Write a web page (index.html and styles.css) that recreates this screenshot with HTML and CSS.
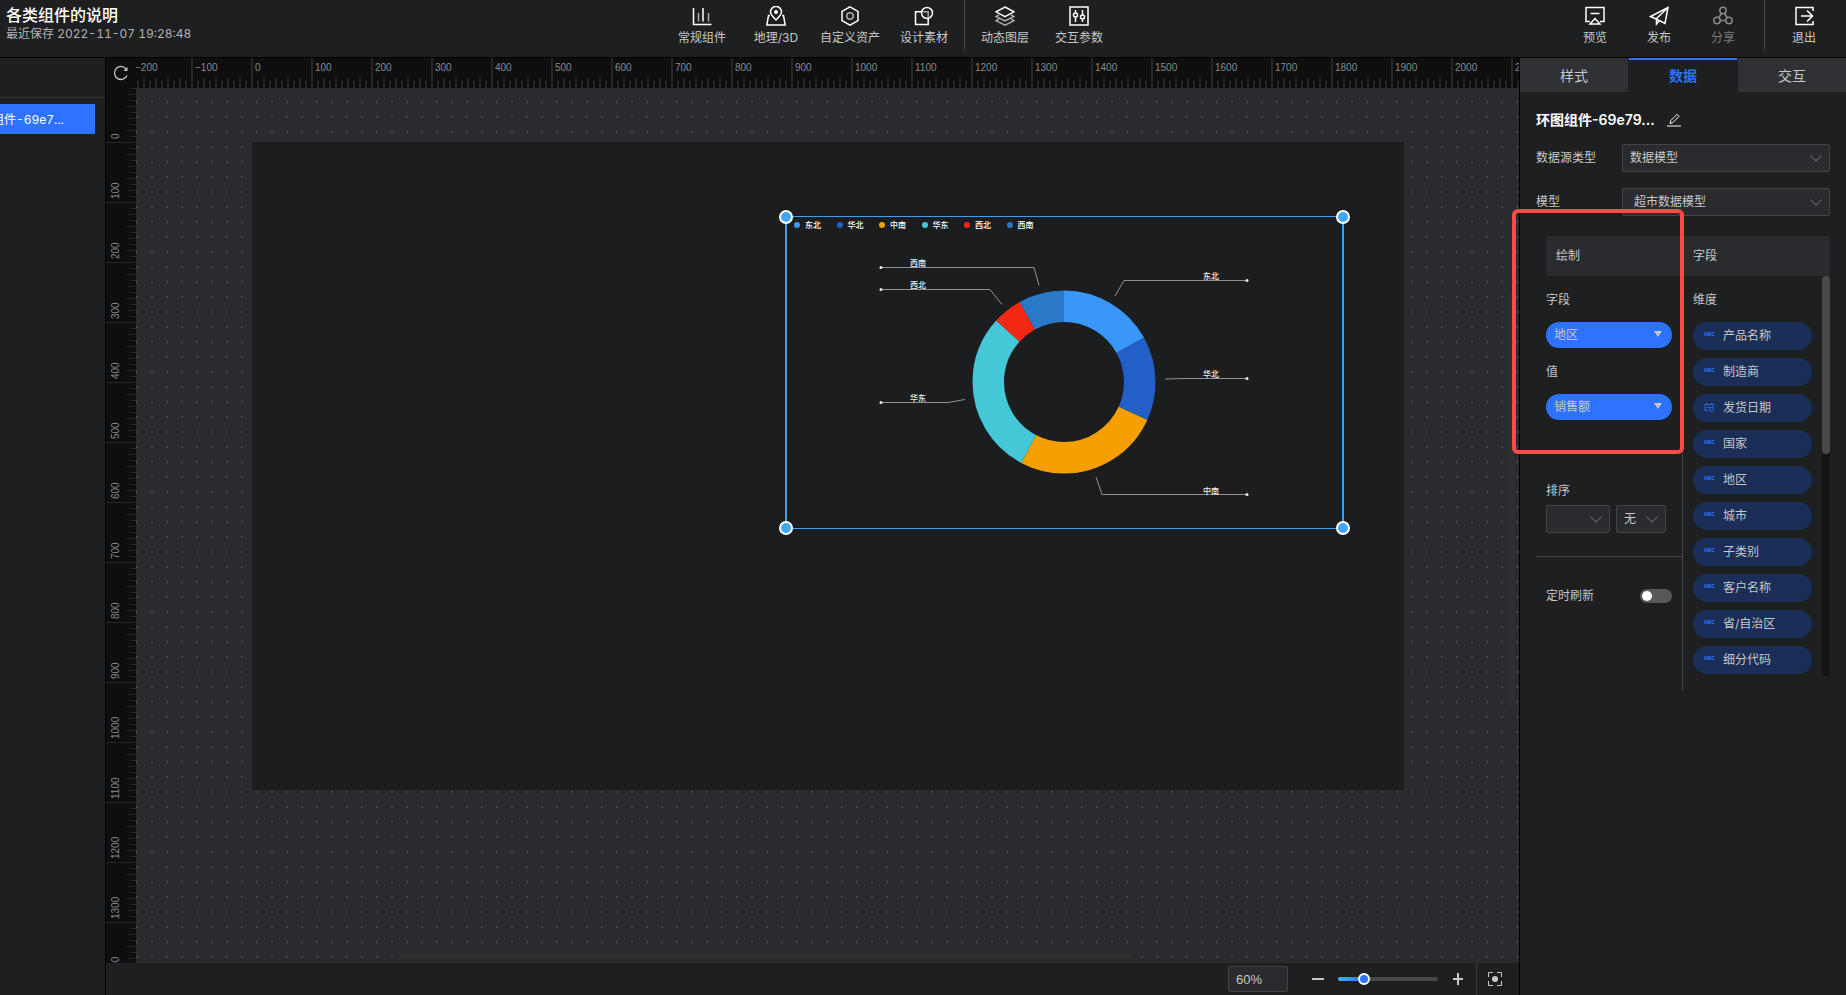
FILE: index.html
```html
<!DOCTYPE html>
<html lang="zh-CN">
<head>
    <meta charset="UTF-8">
    <title>各类组件的说明</title>
    <link rel="stylesheet" href="styles.css">
</head>
<body>
    <header class="topbar">
        <div class="project">
            <h1>各类组件的说明</h1>
            <p>最近保存 2022-11-07 19:28:48</p>
        </div>
        <nav class="tools">
            <button type="button">
                <svg viewBox="0 0 20 20"><path d="M1.500 2v16.500h18"/><path d="M6.500 7v8.500M16.500 7v8.500" class="dim"/><path d="M11 2v13.500"/></svg>
                常规组件
            </button>
            <button type="button">
                <svg viewBox="0 0 20 20"><path d="M10 14C6 10 4.500 8 4.500 6a5.500 5.500 0 0 1 11 0C15.500 8 14 10 10 14z"/><circle cx="10" cy="6" r="2" class="fill"/><path d="M4 9.500H2.500L.8 19h18.400L17.500 9.500H16"/></svg>
                地理/3D
            </button>
            <button type="button">
                <svg viewBox="0 0 20 20"><path d="M10 .8l8 4.600v9.200l-8 4.600-8-4.600V5.400z"/><circle cx="10" cy="10" r="3.200" class="dim"/></svg>
                自定义资产
            </button>
            <button type="button">
                <svg viewBox="0 0 20 20"><path d="M8 5.800H1.500v12.700h12.700V12"/><circle cx="13" cy="7" r="5.500"/><path d="M8 5.800h6.200V12" class="dim"/></svg>
                设计素材
            </button>
            <span class="divider"></span>
            <button type="button">
                <svg viewBox="0 0 20 20"><path d="M10 1l9 4.800-9 4.800-9-4.800z"/><path d="M4 8.800l-3 1.700 9 4.500 9-4.500-3-1.700M4 13l-3 1.700 9 4.500 9-4.500-3-1.700" class="dim"/></svg>
                动态图层
            </button>
            <button type="button">
                <svg viewBox="0 0 20 20"><path d="M1 1h18v18H1z"/><path d="M6.500 4v3M6.500 11v5M13.500 4v5M13.500 13v3"/><circle cx="6.500" cy="9" r="2"/><circle cx="13.500" cy="11" r="2"/></svg>
                交互参数
            </button>
        </nav>
        <div class="actions">
            <button type="button">
                <svg viewBox="0 0 20 20"><path d="M5 15.500H1v-14h18v14h-4M5.500 7.500h9M5 18h10l-5-5.500z"/></svg>
                预览
            </button>
            <button type="button">
                <svg viewBox="0 0 20 20"><path d="M19 1.500L1.500 10.500l4 1.800L16 17.500zM19 1.500L7.500 12.500V18l3-3.500"/></svg>
                发布
            </button>
            <button type="button" disabled>
                <svg viewBox="0 0 20 20"><circle cx="10" cy="4.500" r="3.200"/><circle cx="4" cy="14.500" r="3.200"/><circle cx="16" cy="14.500" r="3.200"/><path d="M8.500 7.500l-3 4.500M11.500 7.500l3 4.500M7.200 14.500h5.600"/></svg>
                分享
            </button>
            <span class="divider"></span>
            <button type="button">
                <svg viewBox="0 0 20 20"><path d="M19 5V1.500H2v17h17V15M7 10h11M13 4.500l5.500 5.500-5.500 5.500"/></svg>
                退出
            </button>
        </div>
    </header>

    <main class="workspace">
        <aside class="layers">
            <div class="layers-head"></div>
            <button type="button" class="layer">环图组件-69e7...</button>
        </aside>

        <section class="editor">
            <div class="board">
                <button type="button" class="reset" aria-label="重置">
                    <svg viewBox="0 0 16 16"><path d="M13.500 4.500A6.500 6.500 0 1 0 14 10.500"/><path d="M14.500 2v4h-4z" class="fill"/></svg>
                </button>
                <div class="ruler ruler-x" id="rulerX"></div>
                <div class="ruler ruler-y" id="rulerY"></div>
                <div class="canvas">
                    <div class="stage">
                        <div class="widget">
                            <ul class="legend">
                                <li><i class="c1"></i>东北</li>
                                <li><i class="c2"></i>华北</li>
                                <li><i class="c3"></i>中南</li>
                                <li><i class="c4"></i>华东</li>
                                <li><i class="c5"></i>西北</li>
                                <li><i class="c6"></i>西南</li>
                            </ul>
                            <svg class="chart" viewBox="1 1 557 312">
                                <g class="ring" transform="rotate(-90 278 166)">
                                    <circle class="c1" cx="278" cy="166" r="75.750" pathLength="360" stroke-dasharray="61 299"/>
                                    <circle class="c2" cx="278" cy="166" r="75.750" pathLength="360" stroke-dasharray="53.500 306.500" stroke-dashoffset="-61"/>
                                    <circle class="c3" cx="278" cy="166" r="75.750" pathLength="360" stroke-dasharray="93.400 266.600" stroke-dashoffset="-114.500"/>
                                    <circle class="c4" cx="278" cy="166" r="75.750" pathLength="360" stroke-dasharray="104.300 255.700" stroke-dashoffset="-207.900"/>
                                    <circle class="c5" cx="278" cy="166" r="75.750" pathLength="360" stroke-dasharray="18.800 341.200" stroke-dashoffset="-312.200"/>
                                    <circle class="c6" cx="278" cy="166" r="75.750" pathLength="360" stroke-dasharray="29 331" stroke-dashoffset="-331"/>
                                </g>
                                <g class="leads">
                                    <path d="M95 51.500h153l5 18"/>
                                    <path d="M95 73.500h109l12 15"/>
                                    <path d="M95 186.500h67l17-3"/>
                                    <path d="M329 80l9-15.500h123"/>
                                    <path d="M379 163l18-.5h64"/>
                                    <path d="M310 261l6 17.500h145"/>
                                </g>
                                <g class="ends">
                                    <circle cx="95" cy="51.500" r="1.500"/>
                                    <circle cx="95" cy="73.500" r="1.500"/>
                                    <circle cx="95" cy="186.500" r="1.500"/>
                                    <circle cx="461" cy="64.500" r="1.500"/>
                                    <circle cx="461" cy="162.500" r="1.500"/>
                                    <circle cx="461" cy="278.500" r="1.500"/>
                                </g>
                                <g class="names">
                                    <text x="124" y="50">西南</text>
                                    <text x="124" y="72">西北</text>
                                    <text x="124" y="185">华东</text>
                                    <text x="417" y="63">东北</text>
                                    <text x="417" y="161">华北</text>
                                    <text x="417" y="278">中南</text>
                                </g>
                            </svg>
                            <span class="handle tl"></span>
                            <span class="handle tr"></span>
                            <span class="handle bl"></span>
                            <span class="handle br"></span>
                        </div>
                    </div>
                    <span class="scroll-x"></span>
                    <span class="scroll-y"></span>
                </div>
            </div>
            <footer class="zoombar">
                <input type="text" class="percent" value="60%" aria-label="缩放比例">
                <button type="button" class="step" aria-label="缩小"><svg viewBox="0 0 12 12"><path d="M0 6h12"/></svg></button>
                <input type="range" min="0" max="100" value="23" aria-label="缩放">
                <button type="button" class="step" aria-label="放大"><svg viewBox="0 0 12 12"><path d="M1 6h10M6 0v12"/></svg></button>
                <button type="button" class="fit" aria-label="适应画布">
                    <svg viewBox="0 0 14 14"><path d="M.5 5V.5H5M9 .5h4.500V5M13.500 9v4.500H9M5 13.500H.5V9"/><circle cx="7" cy="7" r="3"/></svg>
                </button>
            </footer>
        </section>

        <aside class="panel">
            <div class="tabs">
                <button type="button">样式</button>
                <button type="button" class="active">数据</button>
                <button type="button">交互</button>
            </div>
            <div class="panel-body">
                <h2 class="name">环图组件-69e79...
                    <svg viewBox="0 0 14 14"><path d="M0 13h14M3 10.500l.8-3L10 1.300l2 2-6.200 6.400z"/></svg>
                </h2>
                <div class="row">
                    <label for="source">数据源类型</label>
                    <span class="select"><select id="source"><option>数据模型</option></select></span>
                </div>
                <div class="row">
                    <label for="model">模型</label>
                    <span class="select inset"><select id="model"><option>超市数据模型</option></select></span>
                </div>

                <div class="mapping">
                    <div class="mapping-head">
                        <span>绘制</span>
                        <span>字段</span>
                    </div>
                    <div class="draw">
                        <label for="field">字段</label>
                        <span class="pill"><select id="field"><option>地区</option></select></span>
                        <label for="value">值</label>
                        <span class="pill"><select id="value"><option>销售额</option></select></span>
                        <div class="sort">
                            <label for="sortField">排序</label>
                            <div class="sort-row">
                                <span class="select sort-field"><select id="sortField"><option></option></select></span>
                                <span class="select sort-order"><select aria-label="排序方式"><option>无</option></select></span>
                            </div>
                        </div>
                        <div class="refresh">
                            <label for="refresh">定时刷新</label>
                            <input type="checkbox" id="refresh" class="switch">
                        </div>
                    </div>
                    <div class="fields">
                        <h3>维度</h3>
                        <ul>
                            <li><b>ABC</b>产品名称</li>
                            <li><b>ABC</b>制造商</li>
                            <li><svg viewBox="0 0 12 10"><path d="M5 8.500H1v-7h9.500V4M3 0v2M8.500 0v2M3 5h3"/><circle cx="8.500" cy="7" r="2.300"/></svg>发货日期</li>
                            <li><b>ABC</b>国家</li>
                            <li><b>ABC</b>地区</li>
                            <li><b>ABC</b>城市</li>
                            <li><b>ABC</b>子类别</li>
                            <li><b>ABC</b>客户名称</li>
                            <li><b>ABC</b>省/自治区</li>
                            <li><b>ABC</b>细分代码</li>
                        </ul>
                        <span class="scrollbar"></span>
                    </div>
                </div>
            </div>
            <div class="highlight"></div>
        </aside>
    </main>

    <script>
        // one 60px cell per 100 units at 60% zoom
        function fillRuler(id, from, to) {
            const ruler = document.getElementById(id);
            for (let n = from; n <= to; n += 100) {
                const cell = document.createElement('span');
                cell.textContent = String(n).replace('-', '−');
                ruler.appendChild(cell);
            }
        }
        fillRuler('rulerX', -200, 2100);
        fillRuler('rulerY', 0, 1400);
    </script>
</body>
</html>
```

FILE: styles.css
```css
* {
    box-sizing: border-box;
}
body {
    margin: 0;
    height: 100vh;
    display: flex;
    flex-direction: column;
    overflow: hidden;
    background: #1d1f21;
    color: #c8c8c8;
    font: 12px/18px Inter, "Noto Sans CJK SC", sans-serif;
}
h1, h2, h3, p, ul {
    margin: 0;
    padding: 0;
}
ul {
    list-style: none;
}
button, input, select {
    font: inherit;
    color: inherit;
    border: none;
    margin: 0;
    padding: 0;
    background: none;
}
svg {
    fill: none;
    stroke: currentColor;
}
svg .fill {
    fill: currentColor;
    stroke: none;
}

/* top bar */
.topbar {
    flex: none;
    height: 58px;
    display: flex;
    border-bottom: 1px solid #000;
}
.project {
    width: 218px;
    padding: 4px 0 0 6px;
}
.project h1 {
    font-size: 16px;
    line-height: 22px;
    font-weight: 500;
    color: #fff;
}
.project p {
    line-height: 16px;
    color: #b4b4b4;
    font-variant-numeric: tabular-nums;
}
.tools, .actions {
    display: flex;
}
.tools {
    margin: 0 auto;
}
.tools button, .actions button {
    width: 74px;
    padding-top: 6px;
    display: flex;
    flex-direction: column;
    align-items: center;
    gap: 3px;
    white-space: nowrap;
}
.actions {
    padding-right: 10px;
}
.actions button {
    width: 64px;
}
.actions button:disabled {
    color: #77787a;
}
.tools svg, .actions svg {
    width: 20px;
    height: 20px;
    stroke: #fff;
    stroke-width: 1.5;
}
.tools .fill {
    fill: #fff;
    stroke: none;
}
.tools .dim {
    stroke: #aaa;
}
.actions button:disabled svg {
    stroke: #88898b;
}
.divider {
    width: 1px;
    height: 51px;
    margin: 0 3px;
    background: #434446;
}
.actions .divider {
    margin: 0 7px 0 9px;
}

/* layers */
.workspace {
    flex: 1;
    min-height: 0;
    display: flex;
}
.layers {
    flex: none;
    width: 106px;
    overflow: hidden;
    border-right: 1px solid #000;
}
.layers-head {
    height: 40px;
    border-bottom: 1px solid #34363a;
}
.layer {
    display: block;
    width: 143px;
    height: 30px;
    margin: 6px 0 0 -48px;
    padding: 2px 0 0 16px;
    text-align: left;
    color: #fff;
    background: #2d73ff;
    font-variant-numeric: tabular-nums;
}

/* editor */
.editor {
    flex: 1;
    min-width: 0;
    display: flex;
    flex-direction: column;
}
.board {
    flex: 1;
    min-height: 0;
    display: grid;
    grid-template: 30px minmax(0, 1fr) / 30px minmax(0, 1fr);
    background: #0e0e0e;
}
.reset svg {
    display: block;
    width: 16px;
    height: 16px;
    margin: auto;
    stroke-width: 1.3;
}
.ruler {
    display: flex;
    overflow: hidden;
    color: #858a92;
    font: 10px/12px "Liberation Sans", Arial, sans-serif;
}
.ruler span {
    flex: none;
    background-repeat: no-repeat;
}
.ruler-x span {
    width: 60px;
    padding: 4px 0 0 4px;
    background-image:
        linear-gradient(90deg, #262626 2px, transparent 2px),
        repeating-linear-gradient(90deg, #262626 0 2px, transparent 2px 12px),
        repeating-linear-gradient(90deg, #262626 0 2px, transparent 2px 6px);
    background-size: 100% 30px, 100% 10px, 100% 7px;
    background-position: left bottom;
}
.ruler-x span:first-child {
    margin-left: -5px;
}
.ruler-y {
    flex-direction: column;
}
/* rotated half a turn, so ticks start at the bottom edge and sit on the left */
.ruler-y span {
    height: 60px;
    width: 30px;
    padding: 4px 4px 0 0;
    writing-mode: vertical-rl;
    transform: rotate(180deg);
    background-image:
        linear-gradient(#262626 1px, transparent 1px),
        repeating-linear-gradient(#262626 0 1px, transparent 1px 12px),
        repeating-linear-gradient(#262626 0 1px, transparent 1px 6px);
    background-size: 30px 100%, 9px 100%, 6px 100%;
    background-position: left top;
}
.ruler-y span:first-child {
    margin-top: -5px;
}
.canvas {
    position: relative;
    overflow: hidden;
    padding: 54px 0 0 116px;
    background-color: #2a2b2f;
    background-image: conic-gradient(from 270deg at 2px 2px, #434448 90deg, transparent 0);
    background-size: 15px 15px;
    background-position: 0 13px;
}
.stage {
    position: relative;
    width: 1152px;
    height: 648px;
    background: #1c1d1f;
}
.widget {
    position: absolute;
    left: 533px;
    top: 74px;
    width: 559px;
    height: 313px;
    border: 1px solid #3f9dfa;
    border-width: 1px 2px;
}
.legend {
    position: absolute;
    left: 7px;
    top: 2px;
    width: 255px;
    display: grid;
    grid-template-columns: repeat(6, 1fr);
    font-size: 8px;
    line-height: 12px;
    font-weight: 500;
    color: #fff;
}
.legend li {
    display: flex;
    align-items: center;
    gap: 5px;
}
.legend i {
    width: 6px;
    height: 6px;
    border-radius: 50%;
    background: currentColor;
}
.chart {
    display: block;
    width: 557px;
    height: 312px;
}
.c1 { color: #3897f8; }
.c2 { color: #225fc6; }
.c3 { color: #f5a000; }
.c4 { color: #44c8d8; }
.c5 { color: #f42814; }
.c6 { color: #2a79c6; }
.ring {
    stroke-width: 31.5px;
}
.ring circle {
    stroke: currentColor;
}
.leads {
    stroke: #919293;
}
.ends, .names {
    fill: #eee;
    stroke: none;
}
.names {
    font-size: 8px;
    font-weight: 500;
}
.handle {
    position: absolute;
    width: 14px;
    height: 14px;
    border: 2px solid #fff;
    border-radius: 50%;
    background: #42a5ff;
}
.tl { left: -8px; top: -7px; }
.tr { right: -8px; top: -7px; }
.bl { left: -8px; bottom: -7px; }
.br { right: -8px; bottom: -7px; }
.scroll-x, .scroll-y {
    position: absolute;
    border-radius: 3px;
    background: #2f2f2f;
}
.scroll-x {
    left: 19%;
    right: 28%;
    bottom: 4px;
    height: 6px;
}
.scroll-y {
    right: 4px;
    top: 204px;
    bottom: 255px;
    width: 6px;
}

/* zoom bar */
.zoombar {
    flex: none;
    height: 32px;
    display: flex;
    align-items: center;
    justify-content: flex-end;
    padding-right: 17px;
}
.percent {
    width: 60px;
    height: 26px;
    padding-left: 7px;
    border: 1px solid #444;
    border-radius: 2px;
    background: #2a2b2f;
    font: 13px/18px "Liberation Sans", Arial, sans-serif;
}
.step {
    width: 12px;
    height: 12px;
}
.step svg {
    display: block;
    stroke-width: 2;
}
.percent + .step {
    margin: 0 14px 0 24px;
}
input[type="range"] {
    appearance: none;
    width: 100px;
    height: 12px;
    margin-right: 14px;
}
input[type="range"]::-webkit-slider-runnable-track {
    height: 4px;
    border-radius: 2px;
    background: linear-gradient(90deg, #40b4ff, #2d73ff 24%, #47484c 24%);
}
input[type="range"]::-webkit-slider-thumb {
    appearance: none;
    width: 12px;
    height: 12px;
    margin-top: -4px;
    border: 2px solid #fff;
    border-radius: 50%;
    background: #2d73ff;
}
.fit {
    height: 32px;
    margin-left: 12px;
    padding-left: 11px;
    border-left: 1px solid #3a3b3e;
}
.fit svg {
    display: block;
    width: 14px;
    height: 14px;
}
.fit circle {
    fill: currentColor;
    stroke: none;
}

/* settings panel */
.panel {
    position: relative;
    flex: none;
    width: 327px;
    border-left: 1px solid #000;
}
.tabs {
    display: flex;
    gap: 1px;
}
.tabs button {
    flex: 1;
    height: 34px;
    font-size: 14px;
    background: #303135;
    border-top: 2px solid #303135;
}
.tabs .active {
    color: #2d73ff;
    font-weight: bold;
    background: none;
    border-top-color: #2d73ff;
}
.panel-body {
    padding: 18px 16px 0;
}
.name {
    display: flex;
    align-items: center;
    gap: 12px;
    height: 20px;
    margin-bottom: 14px;
    font-size: 14px;
    font-weight: 600;
    color: #fff;
}
.name svg {
    width: 14px;
    height: 14px;
}
.row {
    display: flex;
    align-items: center;
    margin-bottom: 16px;
}
.row label {
    width: 86px;
}
.row .select {
    flex: 1;
}
.select, .pill {
    position: relative;
    display: block;
}
.select select {
    appearance: none;
    display: block;
    width: 100%;
    height: 28px;
    padding-left: 7px;
    border: 1px solid #434446;
    border-radius: 2px;
    background: #2a2b2f;
}
.inset select {
    padding-left: 11px;
}
.select::after {
    content: "";
    position: absolute;
    right: 10px;
    top: 8px;
    width: 7px;
    height: 7px;
    border: solid #66676a;
    border-width: 0 1px 1px 0;
    transform: rotate(45deg);
}
.mapping {
    display: grid;
    grid-template-columns: 147px 1fr;
    margin-top: 20px;
}
.mapping-head {
    grid-column: 1 / 3;
    display: flex;
    align-items: center;
    height: 40px;
    margin-left: 10px;
    background: #2a2b2f;
}
.mapping-head span {
    width: 137px;
    padding-left: 10px;
}
.draw {
    padding: 15px 10px 0 10px;
    border-right: 1px solid #434446;
}
.draw > label, .fields h3 {
    display: block;
    font-size: 12px;
    font-weight: normal;
    margin-bottom: 13px;
}
.pill {
    margin-bottom: 15px;
}
.pill select {
    appearance: none;
    display: block;
    width: 100%;
    height: 26px;
    padding-left: 8px;
    border-radius: 13px;
    background: #2d73ff;
}
.pill::after {
    content: "";
    position: absolute;
    right: 10px;
    top: 9px;
    border: 4px solid transparent;
    border-top: 6px solid #c8c8c8;
    border-bottom: none;
}
.sort {
    margin: 62px -10px 0 -20px;
    padding: 0 0 24px 20px;
    background: linear-gradient(#434446, #434446) 10px 100% / 100% 1px no-repeat;
}
.sort label {
    display: block;
    margin-bottom: 5px;
}
.sort-row {
    display: flex;
    gap: 6px;
}
.sort-field {
    width: 64px;
}
.sort-order {
    width: 50px;
}
.refresh {
    display: flex;
    justify-content: space-between;
    align-items: center;
    margin-top: 30px;
}
.switch {
    appearance: none;
    width: 32px;
    height: 14px;
    padding: 2px;
    border-radius: 7px;
    background: #58585a;
}
.switch::before {
    content: "";
    display: block;
    width: 10px;
    height: 10px;
    border-radius: 50%;
    background: #fff;
}
.fields {
    position: relative;
    height: 415px;
    padding: 15px 18px 0 10px;
}
.fields h3 {
    padding-bottom: 0;
}
.fields li {
    display: flex;
    align-items: center;
    height: 28px;
    margin-bottom: 8px;
    padding-left: 11px;
    border-radius: 14px;
    background: #1b2e57;
}
.fields b {
    width: 19px;
    font: bold 6px/10px "Liberation Mono", monospace;
    color: #2d73ff;
    padding-bottom: 3px;
}
.fields li svg {
    width: 11px;
    height: 9px;
    margin: 0 8px 2px 0;
    color: #2d73ff;
}
.scrollbar {
    position: absolute;
    right: 0;
    top: 0;
    width: 8px;
    height: 400px;
    border-radius: 4px;
    background: #151412;
}
.scrollbar::before {
    content: "";
    display: block;
    height: 178px;
    border-radius: 4px;
    background: #4a4947;
}
.highlight {
    position: absolute;
    left: -8px;
    top: 151px;
    width: 172px;
    height: 245px;
    border: 4px solid #fa4b46;
    border-radius: 6px;
    pointer-events: none;
}
```
